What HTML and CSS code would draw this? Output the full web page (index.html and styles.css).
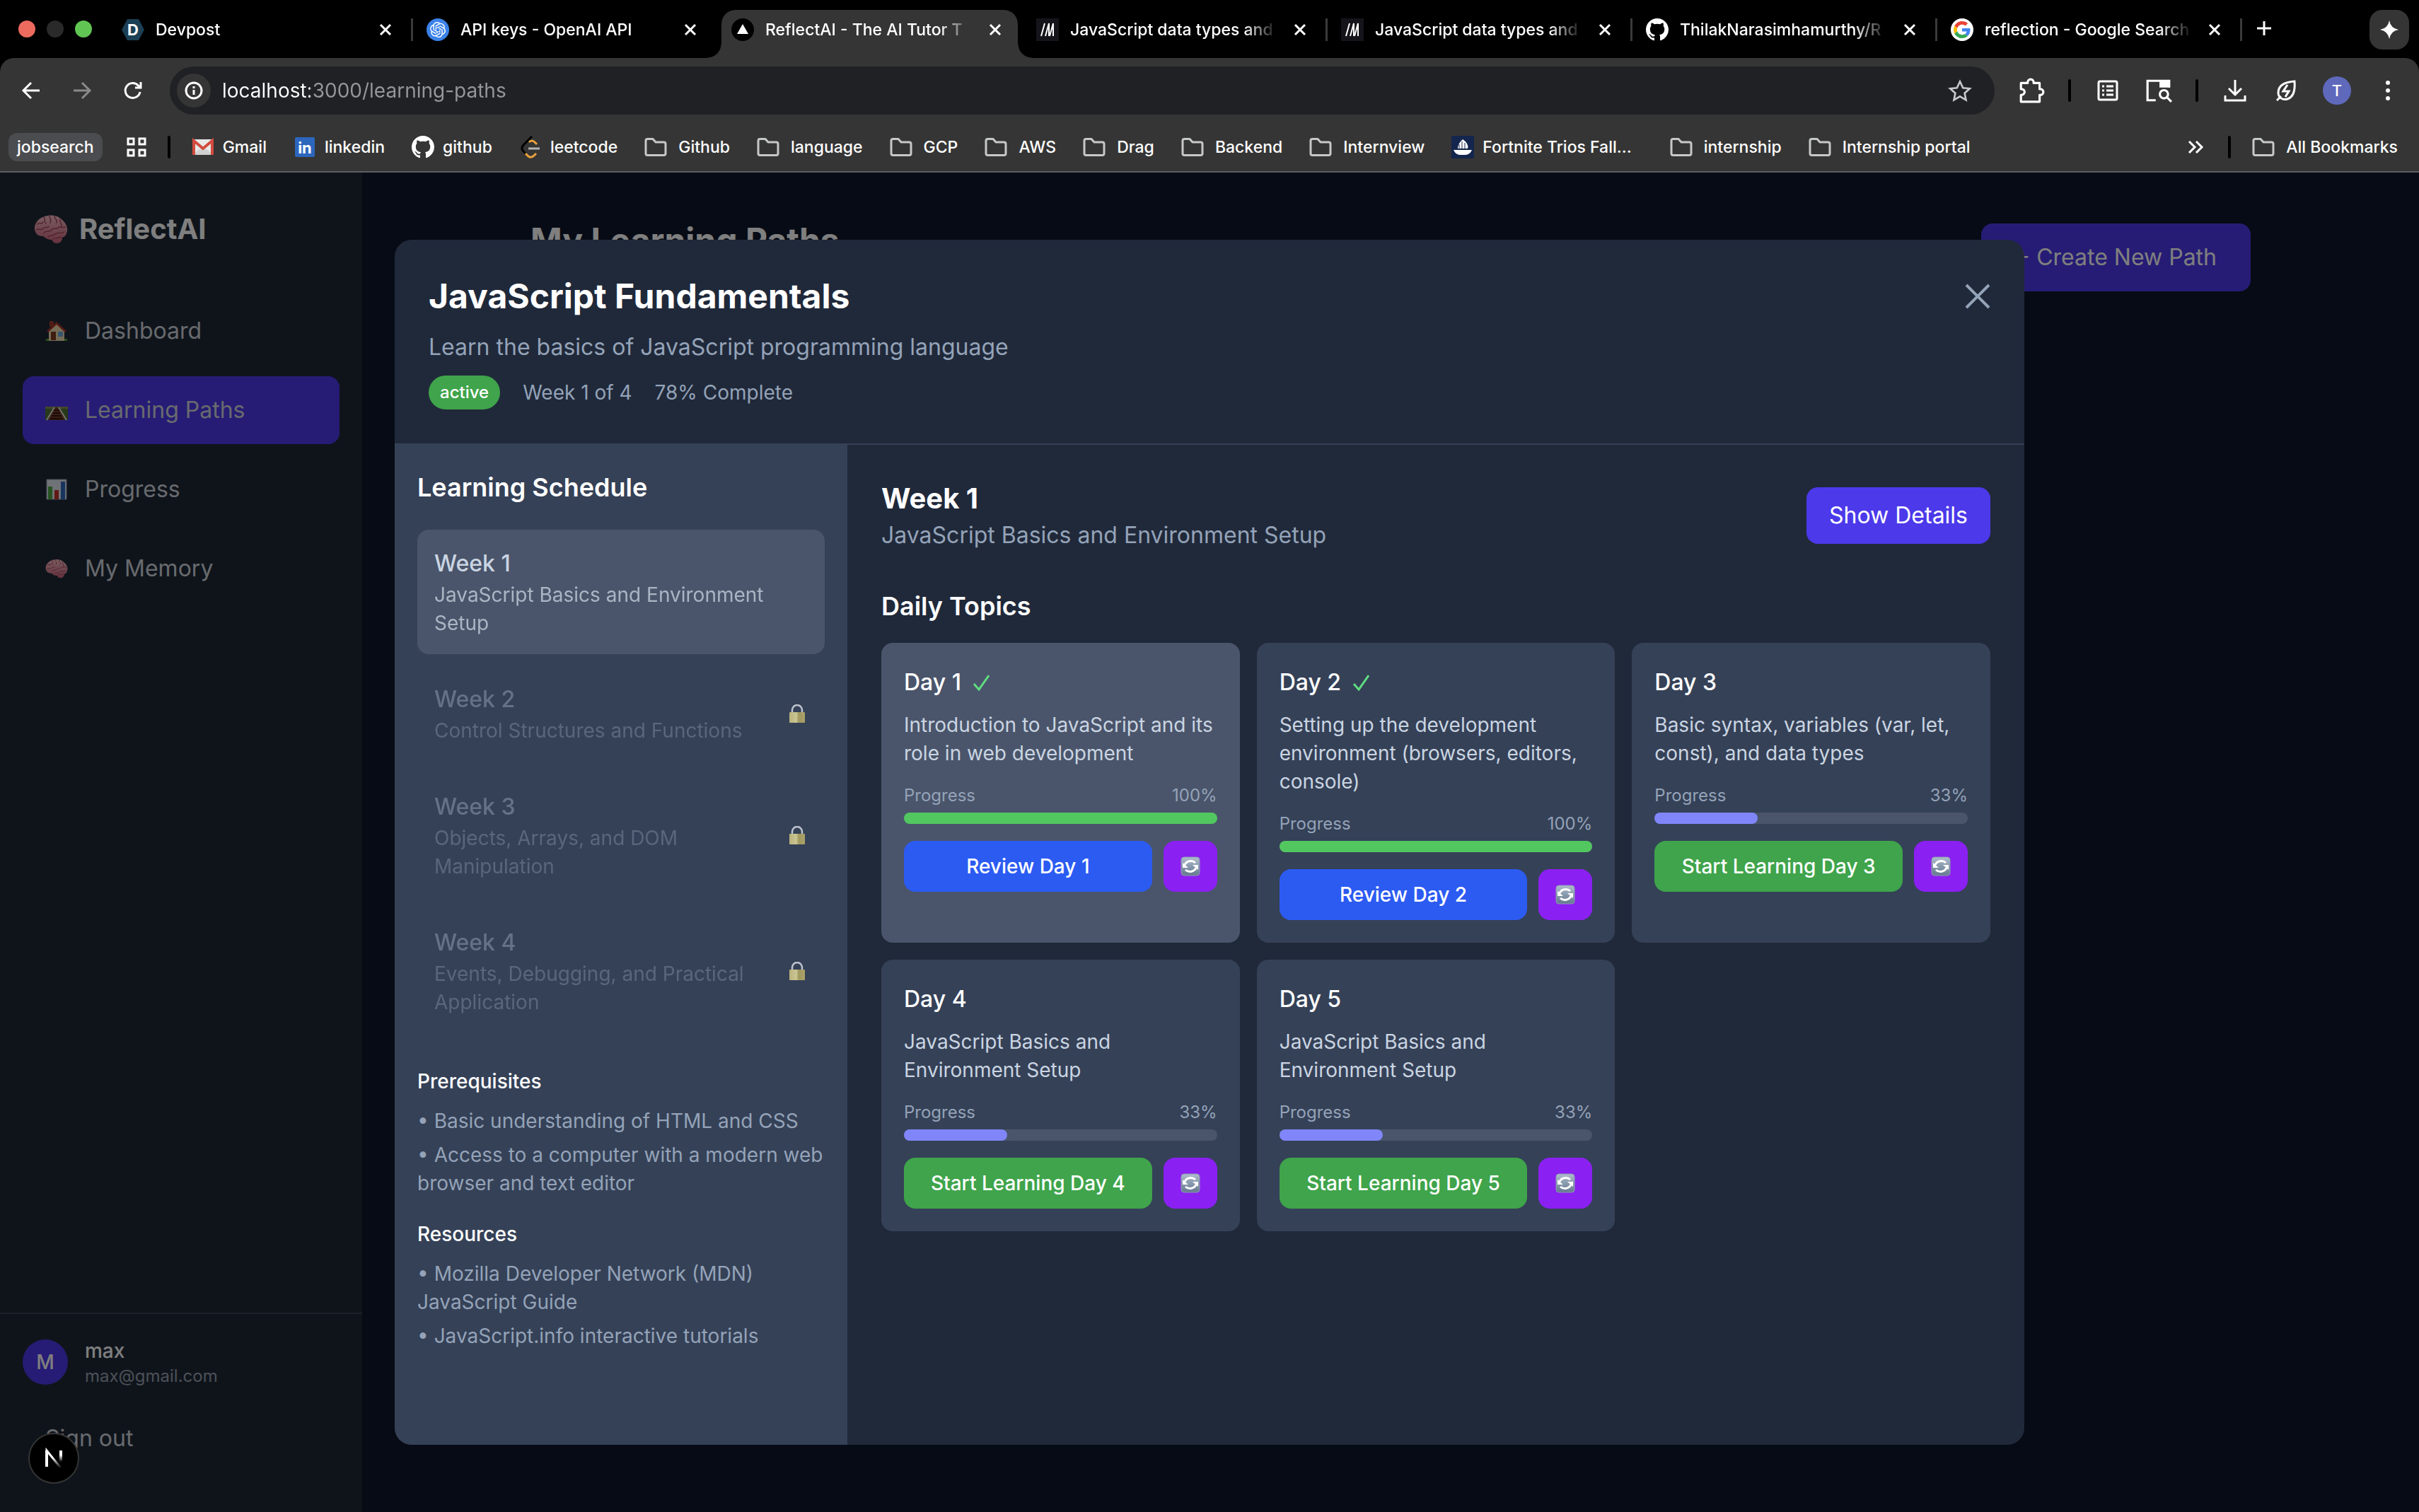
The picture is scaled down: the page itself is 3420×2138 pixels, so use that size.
FILE: index.html
```html
<!DOCTYPE html>
<html lang="en">
<head>
  <meta charset="UTF-8">
  <title>ReflectAI - The AI Tutor</title>
  <link rel="stylesheet" href="styles.css">
</head>
<body>
  <!-- Shared icons -->
  <svg class="sprite" aria-hidden="true">
    <defs>
      <linearGradient id="brainFill" x1="0" y1="0" x2="0" y2="1"><stop offset="0" stop-color="#f3b9c3"/><stop offset="1" stop-color="#c9647c"/></linearGradient>
      <linearGradient id="skyFill" x1="0" y1="0" x2="0" y2="1"><stop offset="0" stop-color="#aebdcd"/><stop offset="1" stop-color="#64788f"/></linearGradient>
      <linearGradient id="brassFill"><stop offset="0" stop-color="#d9cf85"/><stop offset="0.45" stop-color="#f0e8a4"/><stop offset="0.6" stop-color="#bcae62"/><stop offset="1" stop-color="#c8bb6e"/></linearGradient>
      <linearGradient id="nFade" x1="0" y1="0" x2="0" y2="1"><stop offset="0.4" stop-color="#fff"/><stop offset="1" stop-color="#fff" stop-opacity="0"/></linearGradient>
    </defs>
    <symbol id="close" viewBox="0 0 32 32"><path d="M9 9l14 14M23 9L9 23" stroke="#fff" stroke-width="3" fill="none"/></symbol>
    <symbol id="folder" viewBox="0 0 32 32"><path d="M2 7q0-2.500 2.500-2.500h7.500l4 4.500h11.500q2.500 0 2.500 2.500v13.500q0 2.500-2.500 2.500h-23q-2.500 0-2.500-2.500z" fill="none" stroke="#c7c8c9" stroke-width="3" stroke-linejoin="round"/></symbol>
    <symbol id="github" viewBox="0 0 16 16"><path fill="#fff" d="M8 0C3.58 0 0 3.58 0 8c0 3.54 2.29 6.53 5.47 7.59.4.07.55-.17.55-.38 0-.19-.01-.82-.01-1.490-2.010.37-2.530-.49-2.690-.94-.09-.23-.48-.94-.82-1.130-.28-.15-.68-.52-.01-.53.63-.01 1.080.58 1.230.82.72 1.210 1.870.87 2.330.66.07-.52.28-.87.51-1.070-1.780-.2-3.640-.89-3.640-3.950 0-.87.31-1.590.82-2.150-.08-.2-.36-1.020.08-2.120 0 0 .67-.21 2.200.82.64-.18 1.320-.27 2-.27s1.360.09 2 .27c1.530-1.040 2.200-.82 2.200-.82.44 1.100.16 1.920.08 2.120.51.56.82 1.270.82 2.150 0 3.070-1.870 3.750-3.650 3.950.29.25.54.73.54 1.480 0 1.070-.01 1.930-.01 2.200 0 .21.15.46.55.38A8.010 8.010 0 0 0 16 8c0-4.420-3.580-8-8-8z"/></symbol>
    <symbol id="mdn" viewBox="0 0 32 32"><rect width="32" height="32" fill="#15141a"/><path d="M7 25L12 7M13 25L18 7v18M19 25L24 7v18" fill="none" stroke="#fff" stroke-width="2"/></symbol>
    <symbol id="brain" viewBox="0 0 48 42">
      <path d="M1 21C0 12 8 5 15 3c8-3 19-2 25 5 6 5 9 13 6 19-1 4-4 5-6 6 0 5-3 8-8 8-3 0-5-2-7-5-6 0-9-3-12-5C6 31 2 28 1 21z" fill="url(#brainFill)"/>
      <path d="M5 14c4-4 5 2 8-3M4 22c4-3 6 2 9-2s5 1 8-3M14 4c3 3-1 6 3 9M22 2c-1 4 4 5 1 10M29 3c0 4 5 4 3 9M37 7c-2 4 3 5 2 10M14 27c2-5 8-1 11-5s7 0 9-3 6 1 10-1M20 32c3-4 7 0 10-4s7 1 13-3M27 35c3-2 8-1 12-3" fill="none" stroke="#a8485f" stroke-width="1.500" stroke-linecap="round"/>
    </symbol>
    <symbol id="lock" viewBox="0 0 22 26"><path d="M4 12V8a7 7 0 0 1 14 0v4" fill="none" stroke="#dfe5ec" stroke-width="2.500"/><rect x="0" y="11" width="22" height="15" rx="1" fill="url(#brassFill)"/></symbol>
    <symbol id="check" viewBox="0 0 24 24"><path d="M2 14l7 8L23 2" fill="none" stroke="#5fdd80" stroke-width="3"/></symbol>
    <symbol id="sync" viewBox="0 0 28 28"><rect x="1" y="1" width="26" height="26" rx="4" fill="url(#skyFill)" stroke="#8b9db0"/><path d="M6 12a9 8 0 0 1 15-3M22 16a9 8 0 0 1-15 3" fill="none" stroke="#fff" stroke-width="3"/><path d="M3 9v7h8zM25 19v-7h-8z" fill="#fff"/></symbol>
  </svg>

  <!-- Browser chrome -->
  <header class="browser">
    <div class="tab-strip">
      <div class="lights"><span class="light red"></span><span class="light dim"></span><span class="light green"></span></div>
      <div class="tab sep">
        <svg class="favicon" viewBox="0 0 32 32"><path d="M8 1h16l8 15-8 15H8L0 16z" fill="#1b3f54"/><text x="16" y="24" text-anchor="middle" class="favicon-letter">D</text></svg>
        <span class="tab-title">Devpost</span>
        <button class="tab-close" aria-label="Close tab"><svg><use href="#close"/></svg></button>
      </div>
      <div class="tab">
        <svg class="favicon" viewBox="0 0 32 32"><circle cx="16" cy="16" r="16" fill="#3b82e8"/><path transform="translate(5 5) scale(0.920)" fill="#fff" d="M22.282 9.821a5.985 5.985 0 0 0-.516-4.911 6.046 6.046 0 0 0-6.510-2.900A6.065 6.065 0 0 0 4.981 4.182a5.985 5.985 0 0 0-3.998 2.900 6.046 6.046 0 0 0 .743 7.097 5.980 5.980 0 0 0 .511 4.911 6.051 6.051 0 0 0 6.515 2.900A5.985 5.985 0 0 0 13.260 24a6.056 6.056 0 0 0 5.772-4.206 5.989 5.989 0 0 0 3.998-2.900 6.056 6.056 0 0 0-.748-7.073zm-9.022 12.608a4.476 4.476 0 0 1-2.876-1.041l.142-.080 4.778-2.758a.795.795 0 0 0 .393-.681v-6.737l2.020 1.169a.071.071 0 0 1 .038.052v5.583a4.504 4.504 0 0 1-4.495 4.494zm-9.661-4.125a4.471 4.471 0 0 1-.535-3.014l.142.085 4.783 2.758a.771.771 0 0 0 .781 0l5.843-3.369v2.332a.080.080 0 0 1-.033.062L9.740 19.950a4.499 4.499 0 0 1-6.141-1.646zM2.341 7.896a4.485 4.485 0 0 1 2.366-1.973V11.600a.766.766 0 0 0 .388.677l5.814 3.354-2.020 1.169a.076.076 0 0 1-.071 0l-4.830-2.787A4.504 4.504 0 0 1 2.341 7.872zm16.596 3.856L13.104 8.364 15.119 7.200a.076.076 0 0 1 .071 0l4.830 2.791a4.494 4.494 0 0 1-.677 8.104v-5.677a.790.790 0 0 0-.407-.667zm2.011-3.023l-.142-.085-4.774-2.782a.776.776 0 0 0-.785 0L9.409 9.230V6.897a.066.066 0 0 1 .028-.062l4.830-2.787a4.499 4.499 0 0 1 6.680 4.660zM8.307 12.863l-2.020-1.164a.080.080 0 0 1-.038-.057V6.074a4.499 4.499 0 0 1 7.376-3.454l-.142.081L8.704 5.459a.795.795 0 0 0-.393.681zm1.098-2.365l2.602-1.500 2.607 1.500v2.999l-2.597 1.500-2.607-1.500z"/></svg>
        <span class="tab-title">API keys - OpenAI API</span>
        <button class="tab-close" aria-label="Close tab"><svg><use href="#close"/></svg></button>
      </div>
      <div class="tab active">
        <svg class="favicon" viewBox="0 0 32 32"><circle cx="16" cy="16" r="16" fill="#000"/><path d="M16 8l8 14H8z" fill="#fff"/></svg>
        <span class="tab-title">ReflectAI - The AI Tutor T</span>
        <button class="tab-close" aria-label="Close tab"><svg><use href="#close"/></svg></button>
      </div>
      <div class="tab sep">
        <svg class="favicon"><use href="#mdn"/></svg>
        <span class="tab-title">JavaScript data types and</span>
        <button class="tab-close" aria-label="Close tab"><svg><use href="#close"/></svg></button>
      </div>
      <div class="tab sep">
        <svg class="favicon"><use href="#mdn"/></svg>
        <span class="tab-title">JavaScript data types and</span>
        <button class="tab-close" aria-label="Close tab"><svg><use href="#close"/></svg></button>
      </div>
      <div class="tab sep">
        <svg class="favicon"><use href="#github"/></svg>
        <span class="tab-title">ThilakNarasimhamurthy/R</span>
        <button class="tab-close" aria-label="Close tab"><svg><use href="#close"/></svg></button>
      </div>
      <div class="tab sep">
        <svg class="favicon" viewBox="0 0 64 64"><circle cx="32" cy="32" r="32" fill="#fff"/><g transform="translate(8 8)"><path fill="#EA4335" d="M24 9.500c3.540 0 6.710 1.220 9.210 3.600l6.850-6.850C35.900 2.380 30.470 0 24 0 14.620 0 6.510 5.380 2.560 13.220l7.980 6.190C12.430 13.720 17.740 9.500 24 9.500z"/><path fill="#4285F4" d="M46.980 24.550c0-1.570-.15-3.090-.38-4.550H24v9.020h12.940c-.58 2.960-2.260 5.480-4.780 7.180l7.730 6c4.510-4.180 7.090-10.360 7.090-17.650z"/><path fill="#FBBC05" d="M10.530 28.590c-.48-1.450-.76-2.990-.76-4.590s.27-3.140.76-4.590l-7.980-6.190C.92 16.460 0 20.120 0 24c0 3.880.92 7.540 2.560 10.780l7.970-6.190z"/><path fill="#34A853" d="M24 48c6.480 0 11.930-2.130 15.890-5.810l-7.730-6c-2.150 1.450-4.920 2.300-8.160 2.300-6.260 0-11.570-4.220-13.470-9.910l-7.980 6.190C6.510 42.620 14.620 48 24 48z"/></g></svg>
        <span class="tab-title">reflection - Google Search</span>
        <button class="tab-close" aria-label="Close tab"><svg><use href="#close"/></svg></button>
      </div>
      <button class="new-tab" aria-label="New tab"><svg viewBox="0 0 24 24"><path d="M12 2v20M2 12h20" stroke="#fff" stroke-width="3"/></svg></button>
      <button class="spark" aria-label="Assistant"><svg viewBox="0 0 28 28"><path d="M14 1q2 11 13 13-11 2-13 13-2-11-13-13Q12 12 14 1z" fill="#fff"/></svg></button>
    </div>

    <div class="toolbar">
      <button class="tool" aria-label="Back"><svg viewBox="0 0 32 32"><path d="M28 16H6M16 5L5 16l11 11" stroke="#fff"/></svg></button>
      <button class="tool" aria-label="Forward"><svg viewBox="0 0 32 32"><path d="M4 16h22M16 5l11 11-11 11" stroke="#8a8a8a"/></svg></button>
      <button class="tool" aria-label="Reload"><svg viewBox="0 0 32 32"><path d="M26 18a10.500 10.500 0 1 1-2.500-9l3 3M27 4v8h-8" stroke="#fff"/></svg></button>
      <div class="omnibox">
        <button class="site-info" aria-label="Site information"><svg viewBox="0 0 28 28"><circle cx="14" cy="14" r="11" fill="none" stroke="#fff" stroke-width="3"/><path d="M14 13v7M14 8v3" stroke="#fff" stroke-width="3"/></svg></button>
        <input class="url" type="text" aria-label="Address" value="localhost:3000/learning-paths">
        <button class="star" aria-label="Bookmark this tab"><svg viewBox="0 0 32 32"><path d="M16 4l4 8.500 9 .9-6.800 6.100L24 28.500l-8-4.700-8 4.700 1.800-9L3 13.400l9-.9z" fill="none" stroke="#c7c8c9" stroke-width="2.500"/></svg></button>
      </div>
      <div class="tools">
        <button class="tool big" aria-label="Extensions"><svg viewBox="0 0 36 36"><path d="M4 8h9V7a4 4 0 0 1 8 0v1h8v8h1a4 4 0 0 1 0 8h-1v9H4v-9c6 0 7-8 0-8z" stroke="#fff" stroke-linejoin="round"/></svg></button>
        <span class="divider"></span>
        <button class="tool" aria-label="Reading list"><svg viewBox="0 0 32 32"><rect x="3" y="3" width="26" height="26" rx="2" stroke="#fff"/><path d="M8 10h3M14 10h10M8 16h3M14 16h10M8 22h3M14 22h10" stroke="#fff"/></svg></button>
        <button class="tool big" aria-label="Search tabs"><svg viewBox="0 0 36 36"><path d="M14 31H3V5h29v9" stroke="#fff"/><path d="M19 4h14v10H19z" fill="#fff"/><circle cx="25" cy="23" r="5.500" stroke="#fff"/><path d="M29 27l6 6" stroke="#fff"/></svg></button>
        <span class="divider"></span>
        <button class="tool" aria-label="Downloads"><svg viewBox="0 0 32 32"><path d="M16 1v20M7 13l9 9 9-9M2 23v7h28v-7" stroke="#fff"/></svg></button>
        <button class="tool" aria-label="Energy saver"><svg viewBox="0 0 32 32"><path d="M28 3c1 12-1 22-10 25-7 2-13-2-13-9C5 8 15 4 28 3zM3 30l6-6" stroke="#fff"/><path d="M18 8l-6 9h8l-5 8" stroke="#fff"/></svg></button>
        <button class="tool" aria-label="Profile"><span class="profile">T</span></button>
        <button class="tool" aria-label="Menu"><svg viewBox="0 0 32 32"><g fill="#fff"><circle cx="16" cy="5" r="3"/><circle cx="16" cy="16" r="3"/><circle cx="16" cy="27" r="3"/></g></svg></button>
      </div>
    </div>

    <nav class="bookmarks" aria-label="Bookmarks">
      <a class="group-chip" href="#">jobsearch</a>
      <button class="apps" aria-label="Apps"><svg viewBox="0 0 28 28"><path d="M2 2h8v8H2zM18 2h8v8h-8zM2 18h8v8H2zM18 18h8v8h-8z" fill="none" stroke="#fff" stroke-width="3"/></svg></button>
      <span class="divider"></span>
      <div class="bookmark-list">
        <a class="site" href="#"><svg viewBox="0 0 32 32"><path d="M1 5h30v22H1z" fill="#e8e8e8"/><path d="M1 27l15-12 15 12z" fill="#d0d0d0"/><path d="M3 27V7l13 11L29 7v20" fill="none" stroke="#d24b3e" stroke-width="4"/></svg>Gmail</a>
        <a class="site" href="#"><svg viewBox="0 0 32 32"><rect x="2" y="2" width="28" height="28" rx="2" fill="#2c66bd"/><text x="16" y="25" text-anchor="middle" class="favicon-letter">in</text></svg>linkedin</a>
        <a class="site" href="#"><svg><use href="#github"/></svg>github</a>
        <a class="site" href="#"><svg viewBox="0 0 32 32"><path d="M18 1L6 13q-4 5 0 9l4 4" fill="none" stroke="#000" stroke-width="3"/><path d="M14 9q4-4 8 0l3 3M9 25l4 4q4 3 8-1l3-3" fill="none" stroke="#eda23b" stroke-width="3"/><path d="M13 18h16" stroke="#b3b3b3" stroke-width="3"/></svg>leetcode</a>
        <a href="#"><svg><use href="#folder"/></svg>Github</a>
        <a href="#"><svg><use href="#folder"/></svg>language</a>
        <a href="#"><svg><use href="#folder"/></svg>GCP</a>
        <a href="#"><svg><use href="#folder"/></svg>AWS</a>
        <a href="#"><svg><use href="#folder"/></svg>Drag</a>
        <a href="#"><svg><use href="#folder"/></svg>Backend</a>
        <a href="#"><svg><use href="#folder"/></svg>Internview</a>
        <a class="site long" href="#"><svg viewBox="0 0 32 32"><rect width="32" height="32" fill="#14264d"/><path d="M16 5q9 6 7 13H9q0-7 7-13zM3 20h26q-3 7-9 7h-8q-6 0-9-7z" fill="#fff"/><path d="M15 8v10M19 10v8M11 12v6M4 19h24" stroke="#14264d"/></svg>Fortnite Trios Fall...</a>
        <a href="#"><svg><use href="#folder"/></svg>internship</a>
        <a href="#"><svg><use href="#folder"/></svg>Internship portal</a>
      </div>
      <button class="more" aria-label="More bookmarks"><svg viewBox="0 0 24 24"><path d="M3 4l8 8-8 8M13 4l8 8-8 8" fill="none" stroke="#fff" stroke-width="3"/></svg></button>
      <span class="divider"></span>
      <div class="bookmark-list"><a href="#"><svg><use href="#folder"/></svg>All Bookmarks</a></div>
    </nav>
  </header>

  <!-- App -->
  <div class="app">
    <aside class="sidebar">
      <h2 class="logo"><svg viewBox="0 0 48 42"><use href="#brain"/></svg>ReflectAI</h2>
      <nav class="side-nav">
        <a href="#"><svg viewBox="0 0 32 32"><path d="M5 15v15h22V15L16 5z" fill="#ecd9ad"/><path d="M6 2h6v8H6z" fill="#9d3c2c"/><path d="M3 17L16 5l13 12" fill="none" stroke="#a8332a" stroke-width="3"/><path d="M8 17h7v12H8z" fill="#7d3a20"/><path d="M18 17h7v7h-7z" fill="#6fa8dc"/><path d="M1 27h4v3H1zM27 27h4v3h-4z" fill="#5d9c3a"/></svg>Dashboard</a>
        <a class="current" href="#"><svg viewBox="0 0 32 32"><path d="M0 11h32v19H0z" fill="#4d7332"/><path d="M0 11h32v3H0z" fill="#8a8f4c"/><path d="M13 12h6l9 18H4z" fill="#7a3d26"/><path d="M12 16h8M11 20h10M9 24h14M7 28h18" stroke="#30170e" stroke-width="2"/><path d="M13 12L2 30M19 12l11 18" stroke="#e2e2e2" stroke-width="2"/></svg>Learning Paths</a>
        <a href="#"><svg viewBox="0 0 32 32"><path d="M2 2h28v28H2z" fill="#dfe5ef" stroke="#98a2b3"/><path d="M4 12h6v18H4z" fill="#4ea641"/><path d="M13 17h6v13h-6z" fill="#c23227"/><path d="M22 5h6v25h-6z" fill="#2f69bd"/></svg>Progress</a>
        <a href="#"><svg viewBox="0 0 48 42"><use href="#brain"/></svg>My Memory</a>
      </nav>
      <div class="account">
        <div class="user">
          <span class="avatar">M</span>
          <div>
            <p class="user-name">max</p>
            <p class="user-mail">max@gmail.com</p>
          </div>
        </div>
        <button class="sign-out">Sign out</button>
      </div>
    </aside>

    <main class="main">
      <div class="page-head">
        <h1>My Learning Paths</h1>
        <button class="create">+ Create New Path</button>
      </div>
    </main>

    <!-- Learning path modal -->
    <div class="overlay">
      <section class="modal" role="dialog" aria-labelledby="modalTitle">
        <header class="modal-head">
          <div>
            <h2 id="modalTitle">JavaScript Fundamentals</h2>
            <p class="summary">Learn the basics of JavaScript programming language</p>
            <div class="meta"><span class="badge">active</span><span>Week 1 of 4</span><span>78% Complete</span></div>
          </div>
          <button class="modal-close" aria-label="Close"><svg viewBox="0 0 36 36"><path d="M2 2l32 32M34 2L2 34" stroke="#94a3b8" stroke-width="4"/></svg></button>
        </header>

        <div class="modal-body">
          <aside class="schedule">
            <h3>Learning Schedule</h3>
            <div class="weeks">
              <button class="week selected"><span><strong>Week 1</strong><small>JavaScript Basics and Environment Setup</small></span></button>
              <button class="week" disabled><span><strong>Week 2</strong><small>Control Structures and Functions</small></span><svg><use href="#lock"/></svg></button>
              <button class="week" disabled><span><strong>Week 3</strong><small>Objects, Arrays, and DOM Manipulation</small></span><svg><use href="#lock"/></svg></button>
              <button class="week" disabled><span><strong>Week 4</strong><small>Events, Debugging, and Practical Application</small></span><svg><use href="#lock"/></svg></button>
            </div>
            <div class="notes">
              <h4>Prerequisites</h4>
              <ul>
                <li>• Basic understanding of HTML and CSS</li>
                <li>• Access to a computer with a modern web browser and text editor</li>
              </ul>
              <h4>Resources</h4>
              <ul>
                <li>• Mozilla Developer Network (MDN) JavaScript Guide</li>
                <li>• JavaScript.info interactive tutorials</li>
              </ul>
            </div>
          </aside>

          <div class="content">
            <div class="week-head">
              <div>
                <h3>Week 1</h3>
                <p>JavaScript Basics and Environment Setup</p>
              </div>
              <button class="details">Show Details</button>
            </div>
            <h4 class="topics-title">Daily Topics</h4>
            <div class="days">
              <article class="day selected">
                <h5>Day 1 <svg><use href="#check"/></svg></h5>
                <p>Introduction to JavaScript and its role in web development</p>
                <div class="progress-label"><span>Progress</span><span>100%</span></div>
                <div class="bar"><div class="fill done" style="width: 100%"></div></div>
                <div class="actions"><button class="review">Review Day 1</button><button class="redo" aria-label="Regenerate Day 1"><svg><use href="#sync"/></svg></button></div>
              </article>
              <article class="day">
                <h5>Day 2 <svg><use href="#check"/></svg></h5>
                <p>Setting up the development environment (browsers, editors, console)</p>
                <div class="progress-label"><span>Progress</span><span>100%</span></div>
                <div class="bar"><div class="fill done" style="width: 100%"></div></div>
                <div class="actions"><button class="review">Review Day 2</button><button class="redo" aria-label="Regenerate Day 2"><svg><use href="#sync"/></svg></button></div>
              </article>
              <article class="day">
                <h5>Day 3</h5>
                <p>Basic syntax, variables (var, let, const), and data types</p>
                <div class="progress-label"><span>Progress</span><span>33%</span></div>
                <div class="bar"><div class="fill" style="width: 33%"></div></div>
                <div class="actions"><button class="start">Start Learning Day 3</button><button class="redo" aria-label="Regenerate Day 3"><svg><use href="#sync"/></svg></button></div>
              </article>
              <article class="day">
                <h5>Day 4</h5>
                <p>JavaScript Basics and Environment Setup</p>
                <div class="progress-label"><span>Progress</span><span>33%</span></div>
                <div class="bar"><div class="fill" style="width: 33%"></div></div>
                <div class="actions"><button class="start">Start Learning Day 4</button><button class="redo" aria-label="Regenerate Day 4"><svg><use href="#sync"/></svg></button></div>
              </article>
              <article class="day">
                <h5>Day 5</h5>
                <p>JavaScript Basics and Environment Setup</p>
                <div class="progress-label"><span>Progress</span><span>33%</span></div>
                <div class="bar"><div class="fill" style="width: 33%"></div></div>
                <div class="actions"><button class="start">Start Learning Day 5</button><button class="redo" aria-label="Regenerate Day 5"><svg><use href="#sync"/></svg></button></div>
              </article>
            </div>
          </div>
        </div>
      </section>
    </div>

    <button class="dev-badge" aria-label="Next.js dev tools"><svg viewBox="0 0 28 32"><path d="M4 28V5l20 25" fill="none" stroke="url(#nFade)" stroke-width="3"/><path d="M4 28V5" stroke="#fff" stroke-width="4"/><path d="M22 5h4v16h-4z" fill="url(#nFade)"/></svg></button>
  </div>
</body>
</html>
```
FILE: styles.css
```css
/* Reset & base */
* { box-sizing: border-box; margin: 0; padding: 0; }
body { font-family: Inter, "Liberation Sans", sans-serif; font-size: 32px; line-height: 48px; background: #0f172a; color: #ffffff; height: 100vh; display: flex; flex-direction: column; overflow: hidden; }
button { font: inherit; color: inherit; background: none; border: none; cursor: pointer; display: flex; align-items: center; justify-content: center; }
a { color: inherit; text-decoration: none; }
ul { list-style: none; }
svg { display: block; flex-shrink: 0; }
.sprite { position: absolute; width: 0; height: 0; }

/* Browser chrome */
.browser { flex-shrink: 0; background: #000000; border-bottom: 2px solid #5c5e60; font-size: 23px; line-height: 32px; font-weight: 500; }
.tab-strip { display: flex; height: 82px; padding: 14px 14px 0 26px; }
.lights { display: flex; gap: 16px; width: 126px; height: 54px; align-items: center; }
.light { width: 24px; height: 24px; border-radius: 50%; }
.light.red { background: #ec6a5e; }
.light.dim { background: #2a2a2a; }
.light.green { background: #61c554; }
.tab { position: relative; display: flex; align-items: center; gap: 16px; flex: 0 1 431px; min-width: 0; padding: 0 22px 12px 20px; }
.tab.sep::after { content: ""; position: absolute; right: -1px; top: 12px; width: 3px; height: 32px; background: #3a3a3a; }
.tab.active { flex-basis: 419px; margin: 0 6px; padding: 0 16px 12px 14px; background: #353535; border-radius: 20px 20px 0 0; }
.tab.active::before, .tab.active::after { content: ""; position: absolute; bottom: 0; width: 20px; height: 20px; }
.tab.active::before { left: -20px; background: radial-gradient(circle at 0 0, #000000 19px, #353535 20px); }
.tab.active::after { right: -20px; background: radial-gradient(circle at 100% 0, #000000 19px, #353535 20px); }
.favicon { width: 32px; height: 32px; }
.favicon-letter { font: 700 22px Inter, sans-serif; fill: #ffffff; }
.tab-title { flex: 1; min-width: 0; overflow: hidden; white-space: nowrap; mask-image: linear-gradient(to right, #000 84%, transparent); }
.tab-close svg { width: 32px; height: 32px; }
.new-tab { width: 64px; height: 52px; }
.new-tab svg { width: 24px; height: 24px; }
.spark { width: 56px; height: 56px; margin-left: auto; border-radius: 18px; background: #353535; }
.spark svg { width: 28px; height: 28px; }

.toolbar { display: flex; align-items: center; height: 92px; padding: 0 8px; background: #353535; border-radius: 20px 20px 0 0; }
.tool { width: 72px; height: 68px; }
.tool svg { width: 32px; height: 32px; fill: none; stroke-width: 3; }
.tool.big svg { width: 38px; height: 38px; }
.omnibox { flex: 1; display: flex; align-items: center; gap: 16px; height: 68px; margin: 0 16px; padding: 0 32px 0 10px; border-radius: 34px; background: #202125; }
.site-info { width: 48px; height: 48px; border-radius: 50%; background: #353535; }
.site-info svg { width: 28px; height: 28px; }
.url { flex: 1; min-width: 0; border: none; outline: none; font: 400 28px Inter, sans-serif; color: #96979b; background: linear-gradient(to right, #ffffff 124px, #96979b 124px) text; -webkit-text-fill-color: transparent; }
.star svg { width: 34px; height: 34px; }
.tools { display: flex; align-items: center; }
.divider { width: 4px; height: 32px; margin: 0 16px; border-radius: 2px; background: #000000; }
.profile { width: 40px; height: 40px; border-radius: 50%; background: #5f69bb; font-size: 22px; line-height: 40px; }

.bookmarks { display: flex; align-items: center; height: 68px; padding: 0 30px 0 12px; background: #353535; }
.group-chip { height: 40px; padding: 0 12px; border-radius: 12px; background: #4b4c4f; line-height: 40px; }
.apps { margin: 0 14px 0 34px; }
.apps svg { width: 28px; height: 28px; }
.bookmark-list { display: flex; gap: 38px; margin-left: 14px; }
.bookmark-list a { display: flex; align-items: center; gap: 16px; white-space: nowrap; }
.bookmark-list a.site { gap: 12px; }
.bookmark-list a.long { margin-right: 16px; }
.bookmark-list svg { width: 32px; height: 32px; }
.more { margin-left: auto; padding: 0 18px; }
.more svg { width: 24px; height: 24px; }

/* App shell */
.app { position: relative; flex: 1; min-height: 0; display: flex; }
.sidebar { width: 512px; display: flex; flex-direction: column; background: #1f2937; }
.logo { display: flex; align-items: center; gap: 16px; padding: 52px 48px 68px; font-size: 40px; line-height: 56px; font-weight: 700; }
.logo svg { width: 48px; height: 42px; }
.side-nav { flex: 1; display: flex; flex-direction: column; gap: 16px; padding: 0 32px; }
.side-nav a { display: flex; align-items: center; gap: 24px; padding: 24px 32px; border-radius: 16px; color: #d1d5dc; }
.side-nav a.current { background: #4c39ea; }
.side-nav svg { width: 32px; height: 32px; }
.account { padding: 32px 32px 64px; border-top: 2px solid #364153; }
.user { display: flex; align-items: center; gap: 24px; margin-bottom: 32px; }
.avatar { width: 64px; height: 64px; border-radius: 50%; background: #4c39ea; font-size: 28px; line-height: 64px; font-weight: 500; text-align: center; }
.user-name { font-size: 28px; line-height: 40px; font-weight: 500; }
.user-mail { font-size: 24px; line-height: 32px; color: #99a1af; }
.sign-out { padding: 16px 32px; color: #d1d5dc; }
.main { flex: 1; padding: 64px; }
.page-head { display: flex; align-items: center; justify-content: space-between; min-height: 112px; max-width: 2432px; margin: 0 auto; }
.page-head h1 { align-self: flex-start; font-size: 48px; line-height: 64px; font-weight: 700; }
.create { padding: 24px 48px; border-radius: 16px; background: #4c39ea; }

/* Modal */
.overlay { position: absolute; inset: 0; display: flex; align-items: center; justify-content: center; background: rgba(0, 0, 0, 0.5); }
.modal { display: flex; flex-direction: column; width: 100%; max-width: 2304px; height: 90%; border-radius: 24px; background: #20293a; overflow: hidden; }
.modal-head { display: flex; justify-content: space-between; align-items: flex-start; padding: 48px; border-bottom: 2px solid #354157; }
.modal-head h2 { font-size: 48px; line-height: 64px; font-weight: 700; }
.summary { margin: 16px 0; color: #94a3b8; }
.meta { display: flex; align-items: center; gap: 32px; font-size: 28px; line-height: 40px; color: #94a3b8; }
.badge { padding: 8px 16px; border-radius: 24px; background: #3fa44b; color: #ffffff; font-size: 24px; line-height: 32px; font-weight: 500; }
.modal-close { width: 36px; height: 64px; }
.modal-close svg { width: 36px; height: 36px; }
.modal-body { flex: 1; min-height: 0; display: flex; }

.schedule { width: 640px; flex-shrink: 0; padding: 32px; background: #354157; }
.schedule h3 { margin-bottom: 32px; font-size: 36px; line-height: 56px; font-weight: 600; }
.weeks { display: flex; flex-direction: column; gap: 16px; }
.week { justify-content: space-between; padding: 24px; border-radius: 16px; text-align: left; color: #cad5e2; }
.week.selected { background: #4a556b; }
.week:disabled { color: #94a3b8; }
.week:disabled span { opacity: 0.5; }
.week strong { display: block; font-weight: 500; }
.week small { display: block; font-size: 28px; line-height: 40px; opacity: 0.75; }
.week svg { width: 22px; height: 26px; margin: 0 4px 0 24px; opacity: 0.8; }
.notes { padding-top: 48px; }
.notes h4 { margin-bottom: 16px; font-size: 28px; line-height: 40px; font-weight: 500; }
.notes ul { display: flex; flex-direction: column; gap: 8px; margin-bottom: 32px; font-size: 28px; line-height: 40px; color: #94a3b8; }

.content { flex: 1; padding: 48px; }
.week-head { display: flex; align-items: center; justify-content: space-between; margin-bottom: 48px; }
.week-head h3 { font-size: 40px; line-height: 56px; font-weight: 700; }
.week-head p { color: #94a3b8; }
.details { padding: 16px 32px; border-radius: 16px; background: #4c39ea; }
.topics-title { margin-bottom: 24px; font-size: 36px; line-height: 56px; font-weight: 600; }

/* Day cards */
.days { display: grid; grid-template-columns: repeat(3, 1fr); gap: 24px; }
.day { padding: 32px; border-radius: 16px; background: #354157; }
.day.selected { background: #4a556b; }
.day h5 { display: flex; align-items: center; gap: 16px; font-size: 32px; line-height: 48px; font-weight: 500; }
.day h5 svg { width: 24px; height: 24px; }
.day p { margin: 16px 0 24px; font-size: 28px; line-height: 40px; color: #cad5e2; }
.progress-label { display: flex; justify-content: space-between; font-size: 24px; line-height: 32px; color: #94a3b8; }
.bar { height: 16px; margin: 8px 0 24px; border-radius: 8px; background: #4a556b; }
.fill { height: 16px; border-radius: 8px; background: #8086fa; }
.fill.done { background: #52c760; }
.actions { display: flex; gap: 16px; font-size: 28px; line-height: 40px; font-weight: 500; }
.actions button { padding: 16px 24px; border-radius: 16px; }
.actions .review { flex: 1; background: #2c5bf2; }
.actions .start { flex: 1; background: #3fa44b; }
.actions .redo { background: #8b20f2; }
.redo svg { width: 28px; height: 28px; }

/* Floating dev tools button */
.dev-badge { position: absolute; left: 40px; bottom: 40px; width: 72px; height: 72px; border-radius: 50%; border: 2px solid #333333; background: #000000; }
.dev-badge svg { width: 28px; height: 32px; }
```
